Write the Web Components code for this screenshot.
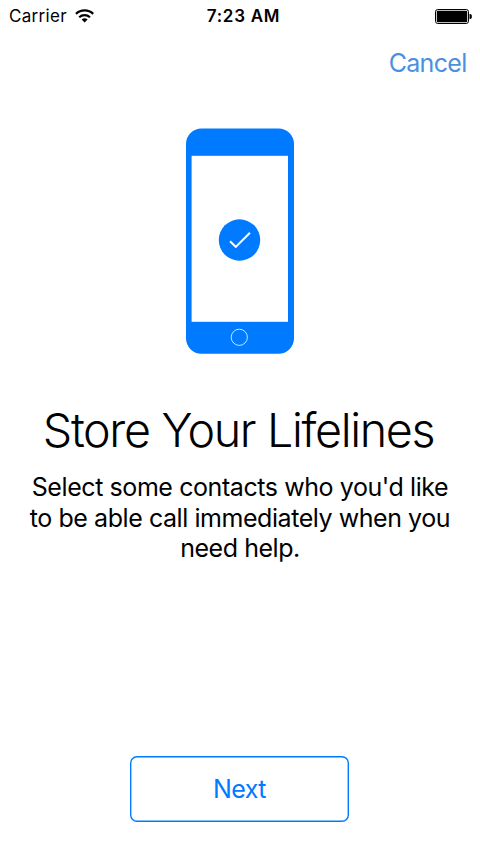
<!DOCTYPE html>
<html lang="en">
<head>
<meta charset="utf-8">
<title>Store Your Lifelines</title>
<style>
body { margin: 0; background: #fff; }
</style>
</head>
<body>
<onboarding-screen>
  <status-bar slot="status"><span slot="carrier">Carrier</span><span slot="time">7:23 AM</span></status-bar>
  <nav-action slot="nav">Cancel</nav-action>
  <phone-art slot="art"></phone-art>
  <page-title slot="title">Store Your Lifelines</page-title>
  <page-copy slot="copy">
    <copy-line style="--ls:-0.42px">Select some contacts who you'd like</copy-line>
    <copy-line style="--ls:-0.44px">to be able call immediately when you</copy-line>
    <copy-line style="--ls:-0.45px">need help.</copy-line>
  </page-copy>
  <outline-button slot="action">Next</outline-button>
</onboarding-screen>
<script>
const define = (name, html) => customElements.define(name, class extends HTMLElement {
  constructor() {
    super();
    this.attachShadow({ mode: 'open' }).innerHTML = html;
  }
});

define('onboarding-screen', `
<style>
:host { display: flex; flex-direction: column; align-items: center; box-sizing: border-box; width: 480px; height: 852px; padding-bottom: 30px; overflow: hidden; background: #fff; color: #000; font-family: Inter, "Liberation Sans", sans-serif; }
.spacer { flex: 1; }
</style>
<slot name="status"></slot><slot name="nav"></slot><slot name="art"></slot><slot name="title"></slot><slot name="copy"></slot>
<div class="spacer"></div>
<slot name="action"></slot>`);

define('status-bar', `
<style>
:host { display: grid; grid-template-columns: 1fr auto 1fr; align-items: center; box-sizing: border-box; width: 480px; height: 30px; padding: 1px 8px 0 9px; font-size: 17px; line-height: 30px; }
.left { display: flex; align-items: center; gap: 8px; letter-spacing: 0.32px; }
.time { padding-left: 6px; font-weight: 600; letter-spacing: 0.75px; }
.right { display: flex; justify-content: flex-end; }
svg { display: block; }
</style>
<div class="left"><slot name="carrier"></slot>
<svg width="20" height="15" viewBox="0 0 20 15" fill="none" stroke="#000" stroke-width="2.2"><path d="M1 4.9a12.4 12.4 0 0 1 17.2 0"/><path d="M4.2 8.3a7.9 7.9 0 0 1 10.8 0"/><path d="M9.6 13.5 6.6 10.6a4.5 4.5 0 0 1 6 0z" fill="#000" stroke="none"/></svg></div>
<div class="time"><slot name="time"></slot></div>
<div class="right"><svg width="37" height="15" viewBox="0 0 37 15"><rect x=".5" y=".5" width="33" height="14" rx="2.2" fill="#fff" stroke="#000"/><rect x="1.8" y="1.8" width="30.4" height="11.4" rx=".8"/><path d="M34.5 5h.6a1.7 1.7 0 0 1 1.7 1.7v1.6a1.7 1.7 0 0 1-1.7 1.7h-.6z"/></svg></div>`);

define('nav-action', `
<style>
:host { display: block; align-self: flex-end; margin: 17px 13.5px 0 0; color: #4a90e2; font-size: 25px; line-height: 32px; letter-spacing: -0.7px; }
</style><slot></slot>`);

define('phone-art', `
<style>
:host { display: block; margin-top: 49px; }
svg { display: block; }
</style>
<svg width="108" height="226" viewBox="0 0 108 226">
<rect y=".5" width="108" height="225.3" rx="15.5" fill="#007aff"/>
<rect x="5.6" y="27.8" width="96.4" height="166" fill="#fff"/>
<circle cx="53.5" cy="112" r="20.7" fill="#007aff"/>
<path d="M44.8 114 49.8 118.9 63.2 105.6" fill="none" stroke="#fff" stroke-width="2.1" stroke-linecap="square"/>
<circle cx="53.3" cy="209.3" r="8.1" fill="none" stroke="#fff" stroke-width=".8"/>
</svg>`);

define('page-title', `
<style>
:host { display: block; margin: 46px 3px 0 0; font-size: 46.6px; font-weight: 300; line-height: 60px; letter-spacing: -1.35px; white-space: nowrap; }
</style><slot></slot>`);

define('page-copy', `
<style>
:host { display: flex; flex-direction: column; align-items: center; margin-top: 12px; font-size: 25px; line-height: 30.5px; }
</style><slot></slot>`);

define('copy-line', `
<style>
:host { display: block; white-space: nowrap; letter-spacing: var(--ls, 0); }
</style><slot></slot>`);

define('outline-button', `
<style>
:host { display: block; margin-right: 1px; }
button { display: block; box-sizing: border-box; width: 219px; height: 66px; margin: 0; padding: 0; border: 0; box-shadow: inset 0 0 0 1.4px #007aff; border-radius: 7px; background: #fff; color: #007aff; font: inherit; font-size: 25px; letter-spacing: -0.6px; }
</style><button type="button"><slot></slot></button>`);
</script>
</body>
</html>
